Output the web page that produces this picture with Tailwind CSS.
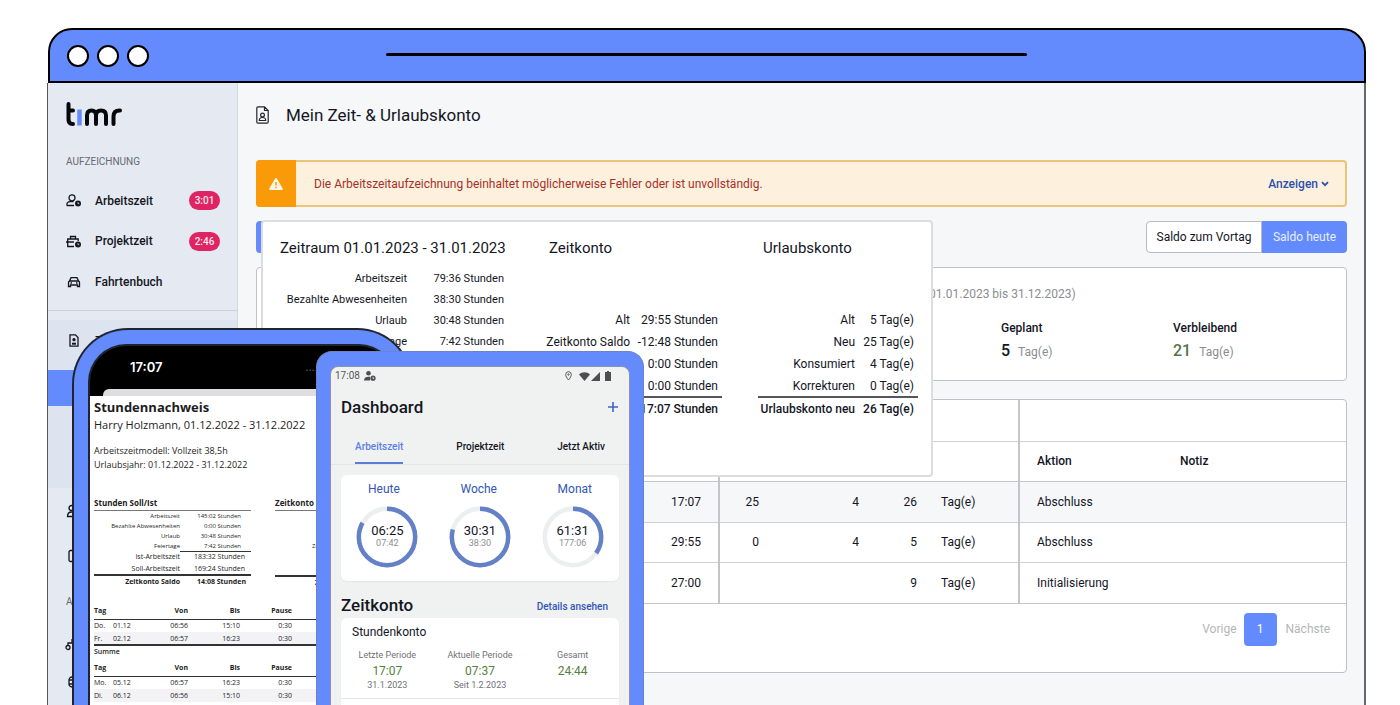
<!DOCTYPE html>
<html lang="de">
<head>
<meta charset="utf-8">
<meta name="viewport" content="width=device-width, initial-scale=1">
<title>timr – Mein Zeit- &amp; Urlaubskonto</title>
<script src="https://cdn.jsdelivr.net/npm/@tailwindcss/browser@4"></script>
</head>
<body class="bg-white">
<div class="relative flex h-screen flex-col overflow-hidden pt-7 pr-[34px] pl-[47px] font-['Roboto',sans-serif] text-xs text-[#14161f]">

  <!-- Browser chrome -->
  <header class="ml-px flex h-[55px] shrink-0 items-center rounded-t-[24px] border-2 border-black bg-[#638bfd] pl-[17px]">
    <div class="flex gap-2">
      <span class="size-[22px] rounded-full border-2 border-black bg-white"></span>
      <span class="size-[22px] rounded-full border-2 border-black bg-white"></span>
      <span class="size-[22px] rounded-full border-2 border-black bg-white"></span>
    </div>
    <div class="mr-[337px] ml-[237px] flex-1 pb-[3px]"><div class="h-[3px] rounded-full bg-black"></div></div>
  </header>

  <div class="flex min-h-0 flex-1 border-r-2 border-l border-r-[#66686c] border-l-[#55575c]">

    <!-- Sidebar -->
    <aside class="w-[190px] shrink-0 border-r border-[#d3d7de] bg-[#e5e9f1]">
      <a href="#" aria-label="timr" class="block px-[17px] pt-[18px]">
        <svg width="58" height="26" viewBox="0 0 58 26" fill="none" stroke-width="4" stroke-linecap="round" stroke-linejoin="round">
          <path stroke="#07080c" d="M3.500 3v15.500c0 3 1.500 4.500 4 4.500H8M3.500 9.500H8"/>
          <path stroke="#638bfd" stroke-linecap="butt" stroke-width="4.500" d="M14.500 8.500v16"/>
          <path stroke="#07080c" d="M22 23v-8.500c0-3.500 1.700-5 4.500-5s4.500 1.500 4.500 5V23M31 14.500c0-3.500 2-5 5-5s5 1.500 5 5V23M48.500 23v-7.500c0-4 2-6 6-6h.5"/>
        </svg>
      </a>
      <h2 class="px-[18px] pt-[27px] text-[10px] leading-4 text-[#666a72]">AUFZEICHNUNG</h2>
      <ul class="pt-[10px] font-medium">
        <li><a href="#" class="flex h-[41px] items-center gap-[13px] pr-[17px] pl-[18px]">
          <svg class="w-4" height="13" viewBox="0 0 16 13" fill="none" stroke="#14161f" stroke-width="1.300"><circle cx="6" cy="3.800" r="3"/><path d="M8 11.500H1.200c-1-2.500.800-3.800 3-3.800h3.300"/><circle cx="12" cy="9.500" r="3" fill="#14161f" stroke="none"/><path stroke="#e5e9f1" stroke-width=".7" d="M12 8v1.700h1.300"/></svg>
          <span class="flex-1">Arbeitszeit</span><span class="w-[31px] rounded-full bg-[#de2462] text-center text-[10px] leading-[19px] text-[#fbe3ea]">3:01</span></a></li>
        <li><a href="#" class="flex h-[40px] items-center gap-[13px] pr-[17px] pl-[18px]">
          <svg class="w-4" height="13" viewBox="0 0 16 13" fill="none" stroke="#14161f" stroke-width="1.300"><path d="M8 11.500H1.700V4h10.500v2M4.500 4V1.500h5V4M0 7h8"/><circle cx="12" cy="9.500" r="3" fill="#14161f" stroke="none"/><path stroke="#e5e9f1" stroke-width=".7" d="M12 8v1.700h1.300"/></svg>
          <span class="flex-1">Projektzeit</span><span class="w-[31px] rounded-full bg-[#de2462] text-center text-[10px] leading-[19px] text-[#fbe3ea]">2:46</span></a></li>
        <li><a href="#" class="flex h-[41px] items-center gap-[13px] pr-[17px] pl-[18px]">
          <svg class="w-4" height="12" viewBox="0 0 16 12" fill="none" stroke="#14161f" stroke-width="1.300"><path d="M3.500 5 5 1.700h6L12.500 5M2.500 10.500V6.500c0-1 .5-1.500 1.500-1.500h8c1 0 1.500.500 1.500 1.500v4h-2V9h-7v1.500zM4.500 7h1.500M10 7h1.500"/></svg>
          <span>Fahrtenbuch</span></a></li>
      </ul>
      <div class="mt-[8px] border-t border-[#cdd1d9] pt-[9px]">
        <div class="bg-[#dee4ef] font-medium">
          <a href="#" class="flex h-[50px] items-center gap-[13px] px-[18px] pb-[9px]">
            <svg class="w-4" height="13" viewBox="0 0 16 13" fill="none" stroke="#14161f" stroke-width="1.300"><path d="M4 .8h5.500L12 3.500v8.700H4z"/><circle cx="8" cy="5.700" r="1" fill="#14161f"/><path d="M6 9.700h4" stroke-width="2"/></svg>
            <span>Zeiten</span></a>
          <a href="#" aria-label="Zeitkonto" class="block h-9 bg-[#638bfd]"></a>
          <div class="h-[82px]"></div>
        </div>
        <a href="#" aria-label="Team" class="flex h-[46px] items-center px-[17px]"><svg width="16" height="14" viewBox="0 0 16 14" fill="none" stroke="#14161f" stroke-width="1.300"><circle cx="6.500" cy="4" r="2.500"/><path d="M2.500 12.500c0-6 8-6 8 0z"/></svg></a>
        <a href="#" aria-label="Dokumente" class="flex h-[44px] items-center px-[17px]"><svg width="16" height="14" viewBox="0 0 16 14" fill="none" stroke="#14161f" stroke-width="1.300"><rect x="4" y="1.500" width="10" height="11" rx="1.500"/></svg></a>
        <h2 class="px-[18px] pt-[16px] text-[10px] leading-4 text-[#666a72]">ADMIN</h2>
        <a href="#" aria-label="Struktur" class="mt-[14px] flex h-[40px] items-center px-[17px]"><svg width="16" height="14" viewBox="0 0 16 14" fill="none" stroke="#14161f" stroke-width="1.300"><circle cx="3" cy="10.500" r="2"/><path d="M3 8V6h9M7 6V2"/></svg></a>
        <a href="#" aria-label="Einstellungen" class="flex h-[36px] items-center px-[17px]"><svg width="16" height="14" viewBox="0 0 16 14" fill="none" stroke="#14161f" stroke-width="1.300"><rect x="4" y="2" width="8" height="10" rx="3"/><path d="M4 5h4M4 9h4"/></svg></a>
      </div>
    </aside>

    <!-- Main content -->
    <main class="min-w-0 flex-1 bg-[#f6f7f9] pt-[20px] pr-[17px] pl-[18px]">
      <div class="flex items-center gap-[17px]">
        <svg width="13" height="18" viewBox="0 0 13 18" fill="none" stroke="#23252e" stroke-width="1.200"><path d="M.8 2c0-.8.400-1.200 1.200-1.200h6.500L12.200 4.500v11.500c0 .8-.4 1.200-1.200 1.200H2c-.8 0-1.200-.4-1.200-1.200zM8.500.8v3.700h3.700"/><circle cx="6.500" cy="9" r="1.900"/><path d="M3.300 14.500c0-4 6.400-4 6.400 0z"/></svg>
        <h1 class="text-[17px] leading-6">Mein Zeit- &amp; Urlaubskonto</h1>
      </div>

      <div class="mt-[33px] flex h-[47px] items-stretch rounded border-2 border-[#ebc476] bg-[#fdf1de]">
        <div class="-my-[2px] -ml-[2px] flex w-[40px] items-center justify-center rounded-l bg-[#fa9a08]">
          <svg width="14" height="12" viewBox="0 0 14 12"><path fill="#fff6e6" d="M7 0c.5 0 .8.300 1 .7l5.700 9.800c.4.800 0 1.500-.8 1.500H1.100C.3 12-.1 11.300.3 10.500L6 .7C6.200.3 6.500 0 7 0z"/><path stroke="#fa9a08" stroke-width="1.500" d="M7 4v3.500M7 8.700v1.500"/></svg>
        </div>
        <p class="flex flex-1 items-center pl-[18px] text-[#a5302a]">Die Arbeitszeitaufzeichnung beinhaltet möglicherweise Fehler oder ist unvollständig.</p>
        <button type="button" class="flex items-center gap-[3px] pr-4 font-medium text-[#2d50b0]">Anzeigen
          <svg width="8" height="6" viewBox="0 0 8 6" fill="none" stroke="#2d50b0" stroke-width="1.800"><path d="m1 1.200 3 3 3-3"/></svg></button>
      </div>

      <div class="mt-[14px] flex items-center justify-between">
        <button type="button" aria-label="Abschluss" class="h-8 w-[120px] rounded bg-[#638bfd]"></button>
        <div class="flex">
          <button type="button" class="h-8 w-[116px] rounded-l border border-[#b9bbc0] bg-white">Saldo zum Vortag</button>
          <button type="button" class="h-8 w-[85px] rounded-r bg-[#638bfd] text-[#e8eeff]">Saldo heute</button>
        </div>
      </div>

      <section class="mt-[14px] h-[114px] rounded border border-[#bfc1c5] bg-white pt-[18px] pl-[668px]">
        <h2 class="leading-4 whitespace-nowrap text-[#8b8d92]">(01.01.2023 bis 31.12.2023)</h2>
        <dl class="flex pt-[18px] pl-[76px]">
          <div class="w-[172px]"><dt class="leading-4 font-medium">Geplant</dt><dd class="flex items-baseline gap-2 pt-[3px] leading-6"><b class="text-base font-medium">5</b><span class="text-[#8b8d92]">Tag(e)</span></dd></div>
          <div><dt class="leading-4 font-medium">Verbleibend</dt><dd class="flex items-baseline gap-2 pt-[3px] leading-6"><b class="text-base font-medium text-[#58704a]">21</b><span class="text-[#8b8d92]">Tag(e)</span></dd></div>
        </dl>
      </section>

      <section class="mt-[18px] h-[274px] overflow-hidden rounded border border-[#bfc1c5] bg-white">
        <table class="w-full table-fixed border-collapse text-left">
          <colgroup><col class="w-[462px]"><col class="w-[58px]"><col class="w-[100px]"><col class="w-[52px]"><col class="w-[90px]"><col class="w-[144px]"><col></colgroup>
          <thead>
            <tr class="h-[41px] border-b border-[#cfd1d4]"><td class="border-r-2 border-[#c4c5c9]"></td><td colspan="4" class="border-r-2 border-[#c4c5c9]"></td><td colspan="2"></td></tr>
            <tr class="h-[40px] border-b border-[#c4c5c9]"><td class="border-r-2 border-[#c4c5c9]"></td><td colspan="4" class="border-r-2 border-[#c4c5c9]"></td><th class="pl-[17px] font-medium">Aktion</th><th class="pl-[17px] font-medium">Notiz</th></tr>
          </thead>
          <tbody>
            <tr class="h-[41px] border-b border-[#cfd1d4] bg-[#f6f7f9]"><td class="border-r-2 border-[#c4c5c9] pr-[17px] text-right">17:07</td><td class="pr-[18px] text-right">25</td><td class="pr-[18px] text-right">4</td><td class="pr-3 text-right">26</td><td class="border-r-2 border-[#c4c5c9] pl-3">Tag(e)</td><td class="pl-[17px]">Abschluss</td><td></td></tr>
            <tr class="h-[40px] border-b border-[#cfd1d4]"><td class="border-r-2 border-[#c4c5c9] pr-[17px] text-right">29:55</td><td class="pr-[18px] text-right">0</td><td class="pr-[18px] text-right">4</td><td class="pr-3 text-right">5</td><td class="border-r-2 border-[#c4c5c9] pl-3">Tag(e)</td><td class="pl-[17px]">Abschluss</td><td></td></tr>
            <tr class="h-[41px] border-b border-[#c4c5c9]"><td class="border-r-2 border-[#c4c5c9] pr-[17px] text-right">27:00</td><td></td><td></td><td class="pr-3 text-right">9</td><td class="border-r-2 border-[#c4c5c9] pl-3">Tag(e)</td><td class="pl-[17px]">Initialisierung</td><td></td></tr>
          </tbody>
        </table>
        <nav aria-label="Seiten" class="flex items-center justify-end pt-[9px] pr-4 text-[#b4b6ba]">
          <button type="button" class="pr-[7px]">Vorige</button>
          <button type="button" class="size-[33px] rounded bg-[#638bfd] text-white">1</button>
          <button type="button" class="pl-[9px]">Nächste</button>
        </nav>
      </section>
    </main>
  </div>

  <!-- Floating account summary -->
  <section class="absolute top-[220px] left-[261px] flex h-[257px] w-[672px] rounded border-2 border-[#dcdddf] bg-white pt-[16px] pl-[17px]">
    <div class="w-[224px]">
      <h2 class="text-[15px] leading-5 whitespace-nowrap">Zeitraum 01.01.2023 - 31.01.2023</h2>
      <table class="mt-[11px] w-full text-right text-[11px] whitespace-nowrap">
        <tr class="h-[21px]"><td>Arbeitszeit</td><td class="w-[97px]">79:36 Stunden</td></tr>
        <tr class="h-[21px]"><td>Bezahlte Abwesenheiten</td><td>38:30 Stunden</td></tr>
        <tr class="h-[21px]"><td>Urlaub</td><td>30:48 Stunden</td></tr>
        <tr class="h-[21px]"><td>Feiertage</td><td>7:42 Stunden</td></tr>
      </table>
    </div>
    <div class="ml-[40px] w-[178px]">
      <h2 class="pl-[5px] text-[15px] leading-5">Zeitkonto</h2>
      <table class="mt-[51px] w-full text-right whitespace-nowrap">
        <tr class="h-[22px]"><td>Alt</td><td class="w-[92px] pr-1">29:55 Stunden</td></tr>
        <tr class="h-[22px]"><td>Zeitkonto Saldo</td><td class="pr-1">-12:48 Stunden</td></tr>
        <tr class="h-[22px]"><td></td><td class="pr-1">0:00 Stunden</td></tr>
        <tr class="h-[22px]"><td></td><td class="pr-1">0:00 Stunden</td></tr>
        <tr class="h-[22px] border-t-2 border-[#55575c] font-medium"><td></td><td class="pr-1">17:07 Stunden</td></tr>
      </table>
    </div>
    <div class="ml-[36px] w-[160px]">
      <h2 class="pl-[5px] text-[15px] leading-5">Urlaubskonto</h2>
      <table class="mt-[51px] w-full text-right whitespace-nowrap">
        <tr class="h-[22px]"><td>Alt</td><td class="w-[63px] pr-1">5 Tag(e)</td></tr>
        <tr class="h-[22px]"><td>Neu</td><td class="pr-1">25 Tag(e)</td></tr>
        <tr class="h-[22px]"><td>Konsumiert</td><td class="pr-1">4 Tag(e)</td></tr>
        <tr class="h-[22px]"><td>Korrekturen</td><td class="pr-1">0 Tag(e)</td></tr>
        <tr class="h-[22px] border-t-2 border-[#55575c] font-medium"><td>Urlaubskonto neu</td><td class="pr-1">26 Tag(e)</td></tr>
      </table>
    </div>
  </section>

  <!-- Phone with the timesheet document -->
  <section class="absolute top-[328px] bottom-0 left-[72px] w-[341px] overflow-hidden rounded-t-[56px] border-2 border-b-0 border-[#20242e] bg-[#638bfd] px-[14px] pt-[14px]">
    <div class="h-full overflow-hidden rounded-t-[38px] border-2 border-b-0 border-[#20242e] bg-black font-['Open_Sans','Noto_Sans',sans-serif] text-[7px] text-[#1c1d22]">
      <div class="flex h-[43px] items-center justify-between pr-[77px] pl-[40px] font-['Inter',sans-serif] text-[13px] font-semibold text-white"><span>17:07</span><span class="text-[10px] text-[#555]">....</span></div>
      <div class="ml-[13px] h-[7px] rounded-tl-[6px] bg-[#dedee0]"></div>
      <div class="h-full bg-white pl-1 whitespace-nowrap">
        <h2 class="pt-[2px] text-[13px] leading-[18px] font-bold">Stundennachweis</h2>
        <p class="text-[11px] leading-[18px]">Harry Holzmann, 01.12.2022 - 31.12.2022</p>
        <p class="pt-[10px] text-[9px] leading-[14px]">Arbeitszeitmodell: Vollzeit 38,5h</p>
        <p class="text-[9px] leading-[14px]">Urlaubsjahr: 01.12.2022 - 31.12.2022</p>
        <div class="flex gap-6 pt-[24px]">
          <div class="w-[157px] shrink-0">
            <h3 class="border-b border-[#777] text-[8px] leading-[14px] font-bold">Stunden Soll/Ist</h3>
            <table class="w-full text-right text-[6px] leading-[8px]">
              <tr class="h-[10px]"><td>Arbeitszeit</td><td class="w-[71px] pr-[10px]">145:02 Stunden</td></tr>
              <tr class="h-[10px]"><td>Bezahlte Abwesenheiten</td><td class="pr-[10px]">0:00 Stunden</td></tr>
              <tr class="h-[10px]"><td>Urlaub</td><td class="pr-[10px]">30:48 Stunden</td></tr>
              <tr class="h-[10px]"><td>Feiertage</td><td class="border-b border-[#333] pr-[10px]">7:42 Stunden</td></tr>
              <tr class="h-[12px] text-[7px]"><td>Ist-Arbeitszeit</td><td class="pr-[6px]">183:32 Stunden</td></tr>
              <tr class="h-[12px] text-[7px]"><td>Soll-Arbeitszeit</td><td class="pr-[6px]">169:24 Stunden</td></tr>
              <tr class="h-[13px] border-t-2 border-[#333] text-[7px] font-bold"><td>Zeitkonto Saldo</td><td class="pr-[5px]">14:08 Stunden</td></tr>
            </table>
          </div>
          <div class="w-[157px] shrink-0">
            <h3 class="border-b border-[#777] text-[8px] leading-[14px] font-bold">Zeitkonto</h3>
            <table class="w-full text-[6px] leading-[8px]">
              <tr class="h-[30px]"><td></td></tr>
              <tr class="h-[10px]"><td class="pl-[37px]">Zeitkonto Saldo</td></tr>
              <tr class="h-[25px]"><td></td></tr>
              <tr class="h-[13px] border-t-2 border-[#333] text-[7px] font-bold"><td class="pl-[40px]">Zeitkonto neu</td></tr>
            </table>
          </div>
        </div>
        <table class="mt-[14px] w-[300px] table-fixed text-right leading-[9px]">
          <colgroup><col class="w-[19px]"><col class="w-[30px]"><col class="w-[45px]"><col class="w-[52px]"><col class="w-[52px]"><col></colgroup>
          <thead><tr class="h-[16px] border-b border-[#333]"><th class="text-left">Tag</th><th></th><th>Von</th><th>Bis</th><th>Pause</th><th></th></tr></thead>
          <tbody>
            <tr class="h-[13px]"><td class="text-left">Do.</td><td class="text-left">01.12</td><td>06:56</td><td>15:10</td><td>0:30</td><td></td></tr>
            <tr class="h-[13px] border-b-2 border-[#333] bg-[#f3f3f6]"><td class="text-left">Fr.</td><td class="text-left">02.12</td><td>06:57</td><td>16:23</td><td>0:30</td><td></td></tr>
            <tr class="h-[11px]"><td colspan="6" class="text-left font-semibold">Summe</td></tr>
          </tbody>
        </table>
        <table class="mt-[4px] w-[300px] table-fixed text-right leading-[9px]">
          <colgroup><col class="w-[19px]"><col class="w-[30px]"><col class="w-[45px]"><col class="w-[52px]"><col class="w-[52px]"><col></colgroup>
          <thead><tr class="h-[16px] border-b border-[#333]"><th class="text-left">Tag</th><th></th><th>Von</th><th>Bis</th><th>Pause</th><th></th></tr></thead>
          <tbody>
            <tr class="h-[13px]"><td class="text-left">Mo.</td><td class="text-left">05.12</td><td>06:57</td><td>16:23</td><td>0:30</td><td></td></tr>
            <tr class="h-[13px] bg-[#f3f3f6]"><td class="text-left">Di.</td><td class="text-left">06.12</td><td>06:56</td><td>15:10</td><td>0:30</td><td></td></tr>
            <tr class="h-[13px]"><td class="text-left">Mi.</td><td class="text-left">07.12</td><td>06:57</td><td>16:23</td><td>0:30</td><td></td></tr>
          </tbody>
        </table>
      </div>
    </div>
  </section>

  <!-- Phone with the dashboard app -->
  <section class="absolute top-[351px] bottom-0 left-[316px] w-[328px] overflow-hidden rounded-t-[16px] border border-b-0 border-[#6c83c4] bg-[#638bfd] px-[13px] pt-[14px]">
    <div class="h-full overflow-hidden rounded-t-lg border border-b-0 border-[#8a93ab] bg-[#f0f2f1]">
      <div class="flex items-center px-1 pt-px text-[10px] leading-4 text-[#55575b]">
        <span>17:08</span>
        <svg class="ml-1" width="12" height="10" viewBox="0 0 12 10" fill="#4c4e52"><circle cx="4.500" cy="2.300" r="2.300"/><path d="M0 9.500C0 6 3 5.300 6 5.800v3.700z"/><circle cx="9" cy="7.200" r="2.600"/><path d="M9 5.800v1.600h1.200" stroke="#f0f2f1" stroke-width=".8" fill="none"/></svg>
        <svg class="ml-auto" width="7" height="10" viewBox="0 0 7 10" fill="none" stroke="#55575b"><path d="M3.500 9C1.500 6.500.7 5 .7 3.500a2.800 2.800 0 0 1 5.600 0C6.300 5 5.500 6.500 3.500 9z"/><circle cx="3.500" cy="3.500" r=".7"/></svg>
        <svg class="ml-[7px]" width="11" height="9" viewBox="0 0 11 9" fill="#4c4e52"><path d="M0 2.500C3-.5 8-.5 11 2.500L5.500 9z"/></svg>
        <svg class="ml-px" width="9" height="9" viewBox="0 0 9 9" fill="#4c4e52"><path d="M9 0v9H0z"/></svg>
        <svg class="mr-[14px] ml-[5px]" width="6" height="10" viewBox="0 0 6 10" fill="#4c4e52"><path d="M2 0h2v1h2v9H0V1h2z"/></svg>
      </div>
      <div class="flex items-center justify-between pt-[11px] pr-[10px] pl-[10px]">
        <h2 class="text-[17px] leading-6 font-medium">Dashboard</h2>
        <button type="button" aria-label="Hinzufügen"><svg width="12" height="12" viewBox="0 0 12 12" stroke="#3f63c4" stroke-width="1.600"><path d="M6 1v10M1 6h10"/></svg></button>
      </div>
      <div class="flex justify-between border-b border-[#e3e5e8] pt-[21px] pr-[24px] pl-[24px] text-[10px] font-medium">
        <button type="button" class="h-[24px] border-b-2 border-[#5a7fd8] pb-[9px] text-[#5a80e6]">Arbeitszeit</button>
        <button type="button" class="h-[24px] pb-[11px]">Projektzeit</button>
        <button type="button" class="h-[24px] pb-[11px]">Jetzt Aktiv</button>
      </div>
      <div class="mx-[10px] mt-[10px] h-[106px] rounded-md bg-white shadow-xs">
        <div class="flex justify-between px-[27px] pt-[6px] leading-4 text-[#3156b6]"><span>Heute</span><span>Woche</span><span>Monat</span></div>
        <div class="grid grid-cols-3 justify-items-center pt-[9px] text-center">
          <div class="relative size-[62px]">
            <svg width="62" height="62" viewBox="0 0 62 62" fill="none" stroke-width="4.500"><circle cx="31" cy="31" r="28.200" stroke="#eceeef"/><circle cx="31" cy="31" r="28.200" stroke="#6480c6" pathLength="100" stroke-dasharray="83.300 100" transform="rotate(-90 31 31)"/></svg>
            <div class="absolute inset-0 flex flex-col items-center justify-center pb-[2px]"><span class="text-[13px] leading-[14px]">06:25</span><span class="text-[9px] leading-[10px] text-[#8b8d92]">07:42</span></div>
          </div>
          <div class="relative size-[62px]">
            <svg width="62" height="62" viewBox="0 0 62 62" fill="none" stroke-width="4.500"><circle cx="31" cy="31" r="28.200" stroke="#eceeef"/><circle cx="31" cy="31" r="28.200" stroke="#6480c6" pathLength="100" stroke-dasharray="79.300 100" transform="rotate(-90 31 31)"/></svg>
            <div class="absolute inset-0 flex flex-col items-center justify-center pb-[2px]"><span class="text-[13px] leading-[14px]">30:31</span><span class="text-[9px] leading-[10px] text-[#8b8d92]">38:30</span></div>
          </div>
          <div class="relative size-[62px]">
            <svg width="62" height="62" viewBox="0 0 62 62" fill="none" stroke-width="4.500"><circle cx="31" cy="31" r="28.200" stroke="#eceeef"/><circle cx="31" cy="31" r="28.200" stroke="#6480c6" pathLength="100" stroke-dasharray="34.700 100" transform="rotate(-90 31 31)"/></svg>
            <div class="absolute inset-0 flex flex-col items-center justify-center pb-[2px]"><span class="text-[13px] leading-[14px]">61:31</span><span class="text-[9px] leading-[10px] text-[#8b8d92]">177:06</span></div>
          </div>
        </div>
      </div>
      <div class="flex items-center justify-between pt-[12px] pr-[21px] pl-[10px]">
        <h2 class="text-[17px] leading-6 font-medium">Zeitkonto</h2>
        <a href="#" class="pt-1 text-[10px] font-medium text-[#3156b6]">Details ansehen</a>
      </div>
      <div class="mx-[10px] mt-px h-[120px] rounded-t-md bg-white shadow-xs">
        <h3 class="pt-[6px] pl-[11px] leading-4">Stundenkonto</h3>
        <div class="grid h-[59px] grid-cols-3 border-b border-[#e3e5e8] pt-[9px] text-center text-[9px] text-[#6f7176]">
          <div><p class="leading-3">Letzte Periode</p><p class="pt-[2px] text-[12px] leading-[17px] text-[#58803a]">17:07</p><p class="leading-[10px]">31.1.2023</p></div>
          <div><p class="leading-3">Aktuelle Periode</p><p class="pt-[2px] text-[12px] leading-[17px] text-[#58803a]">07:37</p><p class="leading-[10px]">Seit 1.2.2023</p></div>
          <div><p class="leading-3">Gesamt</p><p class="pt-[2px] text-[12px] leading-[17px] text-[#58803a]">24:44</p></div>
        </div>
      </div>
    </div>
  </section>
</div>
</body>
</html>
